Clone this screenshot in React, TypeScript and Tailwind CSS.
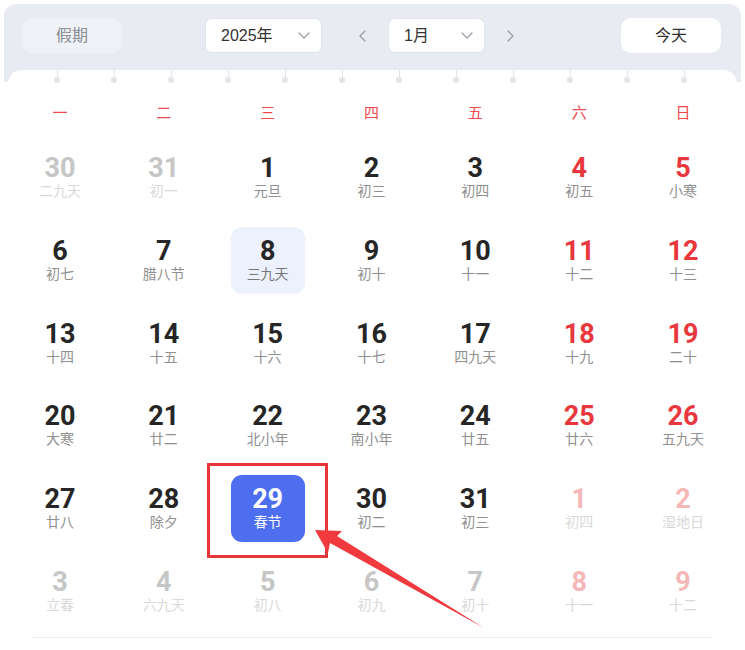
import React from 'react'

type Day = { d: number; l: string; kind?: 'other' | 'hl' | 'sel' }

// one row per week, Monday first
const weeks: Day[][] = [
  [
    { d: 30, l: '二九天', kind: 'other' },
    { d: 31, l: '初一', kind: 'other' },
    { d: 1, l: '元旦' },
    { d: 2, l: '初三' },
    { d: 3, l: '初四' },
    { d: 4, l: '初五' },
    { d: 5, l: '小寒' },
  ],
  [
    { d: 6, l: '初七' },
    { d: 7, l: '腊八节' },
    { d: 8, l: '三九天', kind: 'hl' },
    { d: 9, l: '初十' },
    { d: 10, l: '十一' },
    { d: 11, l: '十二' },
    { d: 12, l: '十三' },
  ],
  [
    { d: 13, l: '十四' },
    { d: 14, l: '十五' },
    { d: 15, l: '十六' },
    { d: 16, l: '十七' },
    { d: 17, l: '四九天' },
    { d: 18, l: '十九' },
    { d: 19, l: '二十' },
  ],
  [
    { d: 20, l: '大寒' },
    { d: 21, l: '廿二' },
    { d: 22, l: '北小年' },
    { d: 23, l: '南小年' },
    { d: 24, l: '廿五' },
    { d: 25, l: '廿六' },
    { d: 26, l: '五九天' },
  ],
  [
    { d: 27, l: '廿八' },
    { d: 28, l: '除夕' },
    { d: 29, l: '春节', kind: 'sel' },
    { d: 30, l: '初二' },
    { d: 31, l: '初三' },
    { d: 1, l: '初四', kind: 'other' },
    { d: 2, l: '湿地日', kind: 'other' },
  ],
  [
    { d: 3, l: '立春', kind: 'other' },
    { d: 4, l: '六九天', kind: 'other' },
    { d: 5, l: '初八', kind: 'other' },
    { d: 6, l: '初九', kind: 'other' },
    { d: 7, l: '初十', kind: 'other' },
    { d: 8, l: '十一', kind: 'other' },
    { d: 9, l: '十二', kind: 'other' },
  ],
]

const weekdays = ['一', '二', '三', '四', '五', '六', '日']

const Chevron = ({ dir }: { dir: 'down' | 'left' | 'right' }) => {
  const d = dir === 'down' ? 'M2 4l5 5 5-5' : dir === 'left' ? 'M9 2L4 7l5 5' : 'M5 2l5 5-5 5'
  return (
    <svg width="14" height="14" viewBox="0 0 14 14" fill="none">
      <path d={d} stroke="#9a9da3" strokeWidth="1.3" strokeLinecap="round" strokeLinejoin="round" />
    </svg>
  )
}

function Cell({ day, col }: { day: Day; col: number }) {
  const weekend = col >= 5
  let box = ''
  let num = weekend ? 'text-[#e8383d]' : 'text-[#262626]'
  let lunar = 'text-[#909090]'
  if (day.kind === 'other') {
    num = weekend ? 'text-[#f5b8b8]' : 'text-[#c6c6c6]'
    lunar = 'text-[#d9d9d9]'
  } else if (day.kind === 'hl') {
    box = 'bg-[#edf0fd]'
    lunar = 'text-[#777]'
  } else if (day.kind === 'sel') {
    box = 'bg-[#4e6ef0]'
    num = 'text-white'
    lunar = 'text-white'
  }
  return (
    <div className="flex items-center justify-center">
      <div className={`flex h-[67px] w-[74px] flex-col items-center justify-center rounded-[11px] ${box}`}>
        <span className={`font-['Roboto','Noto_Sans',sans-serif] text-[27px] leading-[28px] font-bold ${num}`}>{day.d}</span>
        <span className={`text-[14px] leading-[18px] ${lunar}`}>{day.l}</span>
      </div>
    </div>
  )
}

export default function App() {
  return (
    <div className="relative min-h-[650px] bg-white p-1 font-['Liberation_Sans','Noto_Sans_CJK_SC',sans-serif]">
      <div className="rounded-t-xl bg-[linear-gradient(to_bottom,#e8ebf2_78px,#ffffff_78px)]">
        {/* toolbar */}
        <div className="flex h-[66px] items-start pt-[14px] pr-[20px] pl-[18px]">
          <button className="flex h-[35px] w-[100px] items-center justify-center rounded-[10px] bg-[#eff1f6] text-[16px] text-[#8a8d93]">
            假期
          </button>
          <div className="ml-[83px] flex h-[35px] w-[117px] items-center justify-between rounded-[7px] border border-[#e1e4ea] bg-white pr-[10px] pl-[15px] text-[16px] text-[#333]">
            <span>2025年</span>
            <Chevron dir="down" />
          </div>
          <div className="ml-[34px] flex h-[35px] items-center">
            <Chevron dir="left" />
          </div>
          <div className="ml-[18px] flex h-[35px] w-[97px] items-center justify-between rounded-[7px] border border-[#e1e4ea] bg-white pr-[10px] pl-[15px] text-[16px] text-[#333]">
            <span>1月</span>
            <Chevron dir="down" />
          </div>
          <div className="ml-[18px] flex h-[35px] items-center">
            <Chevron dir="right" />
          </div>
          <button className="ml-auto flex h-[35px] w-[100px] items-center justify-center rounded-[10px] bg-white text-[16px] text-[#333]">
            今天
          </button>
        </div>

        {/* calendar sheet */}
        <div className="mx-1 rounded-t-[14px] bg-white pr-[2px]">
          <div className="flex h-[16px] gap-[51px] pl-[46px]">
            {Array.from({ length: 12 }).map((_, i) => (
              <div key={i} className="flex w-[6px] flex-col items-center">
                <div className="h-[7px] w-px bg-[#e2e5ea]" />
                <div className="h-[6px] w-[6px] rounded-full bg-[#e2e5ea]" />
              </div>
            ))}
          </div>
          <div className="grid h-[50px] grid-cols-7 items-center pt-[4px]">
            {weekdays.map((w) => (
              <div key={w} className="text-center text-[15px] text-[#f0484c]">
                {w}
              </div>
            ))}
          </div>
          <div className="grid grid-cols-7 auto-rows-[82.7px]">
            {weeks.map((wk, r) => wk.map((day, c) => <Cell key={`${r}-${c}`} day={day} col={c} />))}
          </div>
        </div>
        <div className="mt-[5px] mr-[29px] ml-[28px] h-px bg-[#eef0f3]" />
      </div>

      {/* annotation */}
      <svg className="pointer-events-none absolute top-0 left-0" width="745" height="650" viewBox="0 0 745 650">
        <rect x="208.5" y="464.5" width="118" height="92" fill="none" stroke="#e8373a" strokeWidth="3" />
        <polygon points="315,530 342,531 337,536 484,628 330,543 328,553" fill="#f03a3d" />
      </svg>
    </div>
  )
}
